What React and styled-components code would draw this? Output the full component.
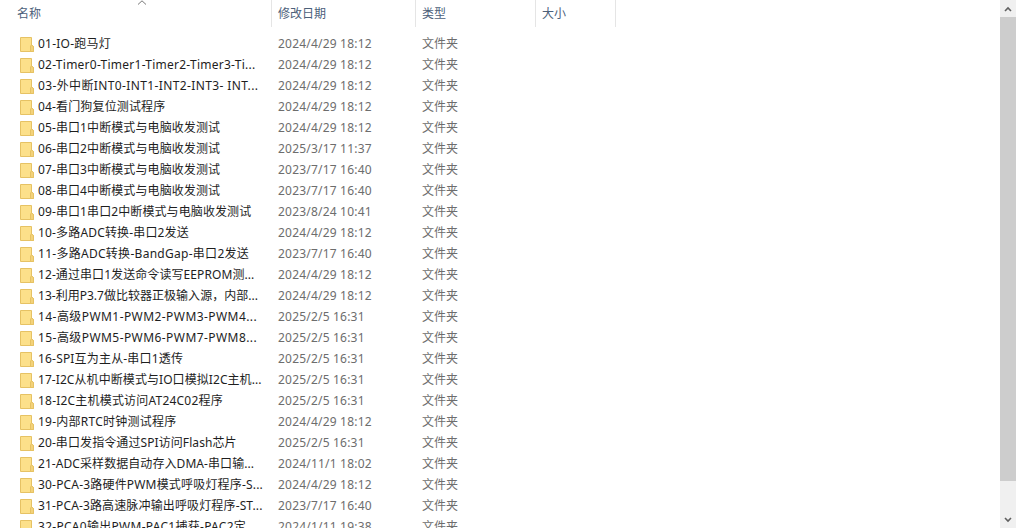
import styled, { createGlobalStyle } from "styled-components";

const Global = createGlobalStyle`
  html, body {
    margin: 0;
    height: 100%;
    overflow: hidden;
    background: #fff;
  }
  #root { height: 100%; }
`;

const Window = styled.div`
  display: flex;
  width: 1016px;
  height: 528px;
  overflow: hidden;
  font-family: "Noto Sans", "Noto Sans CJK SC", sans-serif;
  font-size: 12px;
`;

const Pane = styled.div`
  flex: 1;
  min-width: 0;
  overflow: hidden;
`;

const Header = styled.div`
  display: grid;
  grid-template-columns: 272px 144px 120px 80px;
  height: 27px;
  margin-bottom: 6px;
`;

const HeaderCell = styled.div`
  position: relative;
  box-sizing: border-box;
  padding-left: ${(p) => (p.$first ? "17px" : "6px")};
  line-height: 27px;
  color: #4c607a;
  border-right: 1px solid #e5e5e5;
`;

const SortArrow = styled.svg`
  position: absolute;
  left: 137px;
  top: 0;
`;

const Row = styled.div`
  display: grid;
  grid-template-columns: 278px 144px 1fr;
  height: 21px;
  line-height: 21px;
  color: #6d6d6d;
  white-space: nowrap;
`;

const NameCell = styled.div`
  display: flex;
  align-items: center;
  gap: 4px;
  padding-left: 18px;
  color: #1e1e1e;
  letter-spacing: ${(p) => p.$track}px;
`;

const DateCell = styled.div`
  letter-spacing: 0.2px;
`;

const Scrollbar = styled.div`
  display: flex;
  flex-direction: column;
  width: 16px;
  background: #f0f0f0;
`;

const ScrollButton = styled.div`
  display: flex;
  align-items: center;
  justify-content: center;
  height: 17px;
`;

const ScrollThumb = styled.div`
  height: 464px;
  background: #cdcdcd;
`;

const ScrollRest = styled.div`
  flex: 1;
`;

const FolderIcon = () => (
  <svg width="16" height="16" viewBox="0 0 16 16" style={{ flex: "none" }}>
    <path d="M2.5 1.5H13.5V9L15.5 10.5V15.5H2.5Z" fill="#fce08a" stroke="#e6c264" />
    <path d="M12.5 10V15.5H15.5V10.5L13.5 9Z" fill="#f3d27a" stroke="#e6c264" />
  </svg>
);

const Chevron = ({ down }) => (
  <svg width="8" height="6" viewBox="0 0 8 6">
    <path
      d={down ? "M1 1l3 3 3-3" : "M1 5l3-3 3 3"}
      fill="none"
      stroke="#606060"
      strokeWidth="1.6"
    />
  </svg>
);

// name, date, letter spacing of the name
const items = [
  ["01-IO-跑马灯", "2024/4/29 18:12", 0.22],
  ["02-Timer0-Timer1-Timer2-Timer3-Ti...", "2024/4/29 18:12", 0.25],
  ["03-外中断INT0-INT1-INT2-INT3- INT...", "2024/4/29 18:12", 0.38],
  ["04-看门狗复位测试程序", "2024/4/29 18:12", 0.15],
  ["05-串口1中断模式与电脑收发测试", "2024/4/29 18:12", 0.1],
  ["06-串口2中断模式与电脑收发测试", "2025/3/17 11:37", 0.1],
  ["07-串口3中断模式与电脑收发测试", "2023/7/17 16:40", 0.1],
  ["08-串口4中断模式与电脑收发测试", "2023/7/17 16:40", 0.1],
  ["09-串口1串口2中断模式与电脑收发测试", "2023/8/24 10:41", 0.1],
  ["10-多路ADC转换-串口2发送", "2024/4/29 18:12", 0.16],
  ["11-多路ADC转换-BandGap-串口2发送", "2023/7/17 16:40", 0.28],
  ["12-通过串口1发送命令读写EEPROM测...", "2024/4/29 18:12", 0.08],
  ["13-利用P3.7做比较器正极输入源，内部...", "2024/4/29 18:12", 0.02],
  ["14-高级PWM1-PWM2-PWM3-PWM4...", "2025/2/5 16:31", 0.43],
  ["15-高级PWM5-PWM6-PWM7-PWM8...", "2025/2/5 16:31", 0.43],
  ["16-SPI互为主从-串口1透传", "2025/2/5 16:31", 0.18],
  ["17-I2C从机中断模式与IO口模拟I2C主机...", "2025/2/5 16:31", 0.07],
  ["18-I2C主机模式访问AT24C02程序", "2025/2/5 16:31", 0.2],
  ["19-内部RTC时钟测试程序", "2024/4/29 18:12", 0.25],
  ["20-串口发指令通过SPI访问Flash芯片", "2025/2/5 16:31", 0.09],
  ["21-ADC采样数据自动存入DMA-串口输...", "2024/11/1 18:02", 0.07],
  ["30-PCA-3路硬件PWM模式呼吸灯程序-S...", "2024/4/29 18:12", 0.18],
  ["31-PCA-3路高速脉冲输出呼吸灯程序-ST...", "2023/7/17 16:40", 0.14],
  ["32-PCA0输出PWM-PAC1捕获-PAC2定...", "2024/1/11 19:38", 0.28],
];

export default function App() {
  return (
    <Window>
      <Global />
      <Pane>
        <Header>
          <HeaderCell $first>
            名称
            <SortArrow width="10" height="5" viewBox="0 0 10 5">
              <path d="M1 4.5L5 .8l4 3.7" fill="none" stroke="#7a7a7a" />
            </SortArrow>
          </HeaderCell>
          <HeaderCell>修改日期</HeaderCell>
          <HeaderCell>类型</HeaderCell>
          <HeaderCell>大小</HeaderCell>
        </Header>
        {items.map(([name, date, track]) => (
          <Row key={name}>
            <NameCell $track={track}>
              <FolderIcon />
              {name}
            </NameCell>
            <DateCell>{date}</DateCell>
            <div>文件夹</div>
          </Row>
        ))}
      </Pane>
      <Scrollbar>
        <ScrollButton>
          <Chevron />
        </ScrollButton>
        <ScrollThumb />
        <ScrollRest />
        <ScrollButton>
          <Chevron down />
        </ScrollButton>
      </Scrollbar>
    </Window>
  );
}
